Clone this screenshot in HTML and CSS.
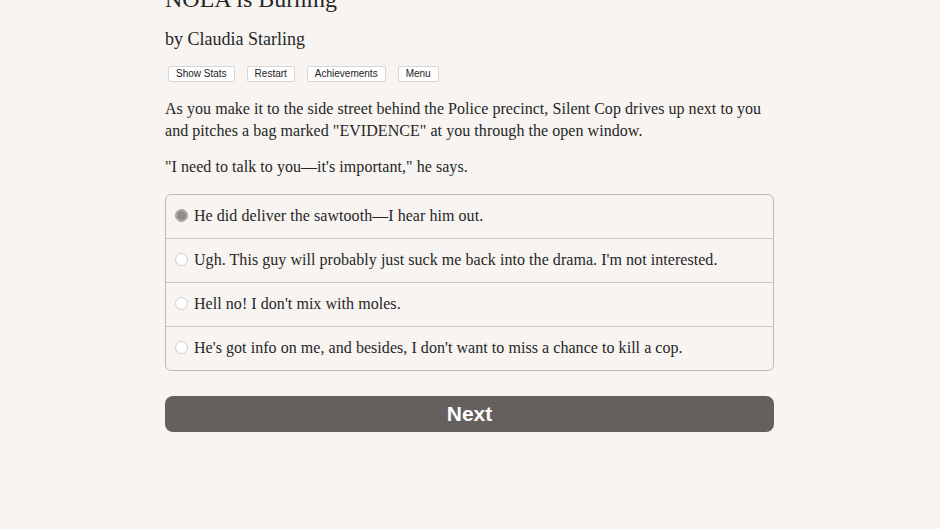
FILE: index.html
```html
<!DOCTYPE html>
<html>
<head>
<meta charset="utf-8">
<link rel="stylesheet" href="styles.css">
</head>
<body>
<main class="page">
  <h1 class="title">NOLA is Burning</h1>
  <h2 class="author">by Claudia Starling</h2>
  <div class="toolbar">
    <button class="tool">Show Stats</button>
    <button class="tool">Restart</button>
    <button class="tool">Achievements</button>
    <button class="tool">Menu</button>
  </div>
  <p class="text">As you make it to the side street behind the Police precinct, Silent Cop drives up next to you and pitches a bag marked "EVIDENCE" at you through the open window.</p>
  <p class="text">"I need to talk to you—it's important," he says.</p>
  <div class="choices">
    <label class="choice"><span class="radio checked"></span><span>He did deliver the sawtooth—I hear him out.</span></label>
    <label class="choice"><span class="radio"></span><span>Ugh. This guy will probably just suck me back into the drama. I'm not interested.</span></label>
    <label class="choice"><span class="radio"></span><span>Hell no! I don't mix with moles.</span></label>
    <label class="choice"><span class="radio"></span><span>He's got info on me, and besides, I don't want to miss a chance to kill a cop.</span></label>
  </div>
  <button class="next">Next</button>
</main>
</body>
</html>
```
FILE: styles.css
```css
html, body {
  margin: 0;
  padding: 0;
  background: #f7f4f1;
}
body {
  font-family: "Liberation Serif", "DejaVu Serif", serif;
  color: #262626;
}
.page {
  width: 609px;
  margin: 0 auto 0 165px;
  display: flex;
  flex-direction: column;
  align-items: stretch;
}
.title {
  font-size: 24px;
  font-weight: normal;
  margin: -16px 0 0 0;
  line-height: 30px;
}
.author {
  font-size: 18px;
  font-weight: normal;
  margin: 13px 0 0 0;
  line-height: 24px;
}
.toolbar {
  display: flex;
  gap: 12px;
  margin: 15px 0 0 3px;
}
.tool {
  font-family: "Liberation Sans", Arial, sans-serif;
  font-size: 10px;
  line-height: 12px;
  padding: 1px 7px;
  background: #fff;
  border: 1px solid #d8d5d2;
  border-radius: 2px;
  color: #222;
}
.text {
  font-size: 16px;
  line-height: 22px;
  letter-spacing: 0.05px;
  margin: 16px 0 0 0;
}
.text + .text {
  margin-top: 14px;
}
.choices {
  margin-top: 16px;
  border: 1px solid #bdbab7;
  border-radius: 6px;
  display: flex;
  flex-direction: column;
}
.choice {
  display: flex;
  align-items: center;
  gap: 6px;
  padding-left: 9px;
  padding-bottom: 2px;
  box-sizing: border-box;
  height: 44px;
  font-size: 16px;
  letter-spacing: 0.05px;
  border-top: 1px solid #c9c6c3;
}
.choice:first-child {
  border-top: none;
  height: 43px;
}
.radio {
  width: 11px;
  height: 11px;
  border-radius: 50%;
  border: 1px solid #cfccc9;
  background: #fff;
  box-sizing: content-box;
  flex: none;
}
.radio.checked {
  background: #8f8c8a;
  border-color: #a8a5a3;
  box-shadow: inset 0 0 0 1px #b5b2b0;
}
.next {
  margin-top: 25px;
  height: 36px;
  padding: 0 0 1px 0;
  border: none;
  border-radius: 8px;
  background: #63605e;
  color: #fff;
  font-family: "Liberation Sans", Arial, sans-serif;
  font-weight: bold;
  font-size: 21px;
}
```
